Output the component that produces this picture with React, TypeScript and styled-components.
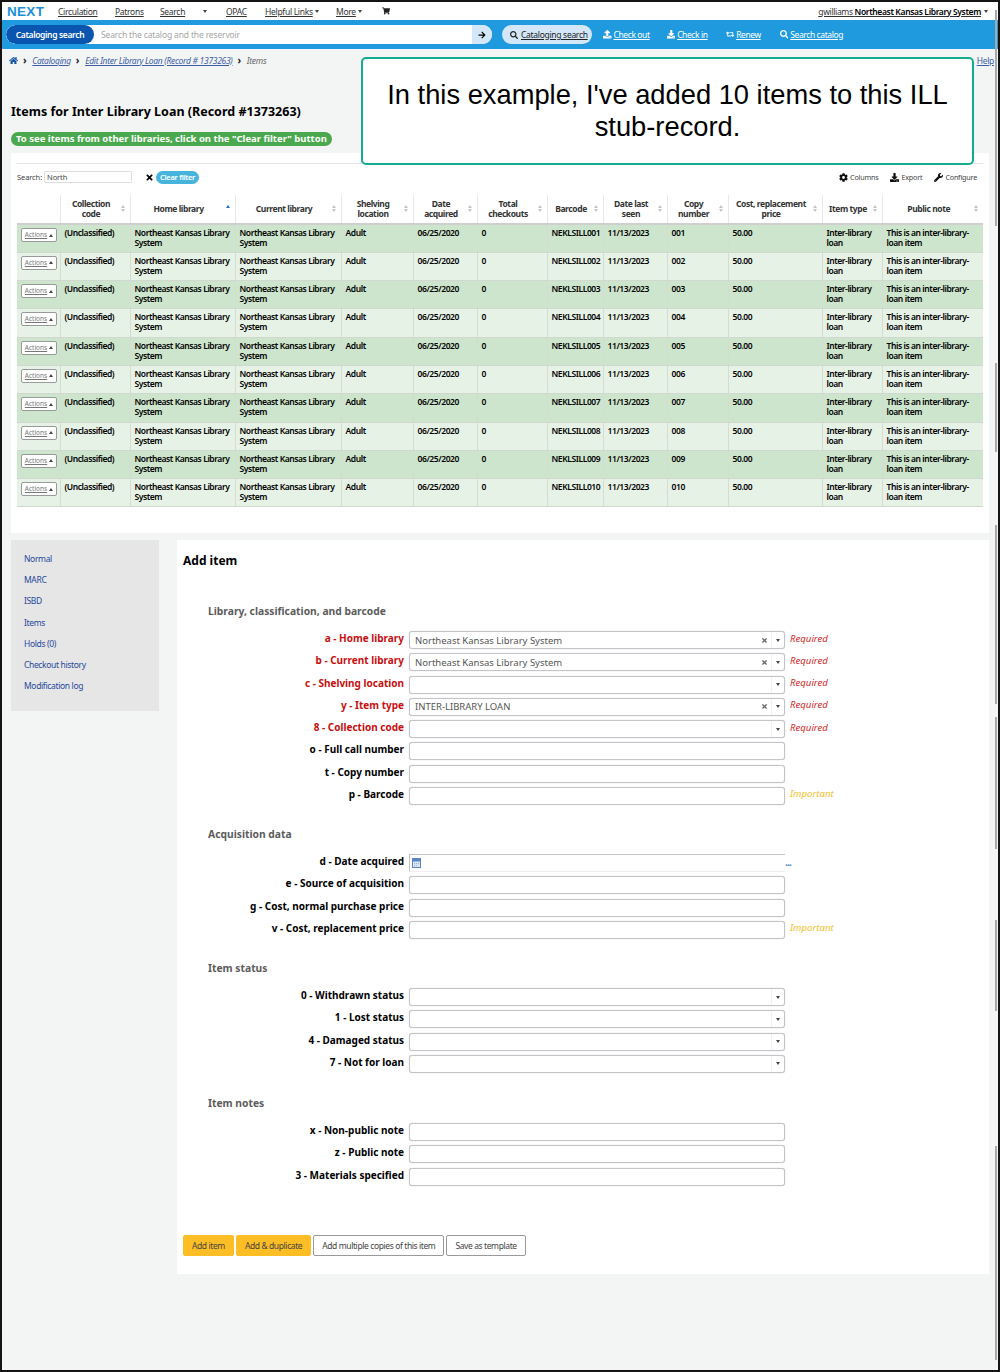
import React from "react";
import styled, { createGlobalStyle } from "styled-components";
import {
  FaHome,
  FaShoppingCart,
  FaSearch,
  FaArrowRight,
  FaUpload,
  FaDownload,
  FaRetweet,
  FaCog,
  FaWrench,
  FaTimes,
} from "react-icons/fa";

const GlobalStyle = createGlobalStyle`
  html, body {
    margin: 0;
    padding: 0;
    background: #f3f5f4;
    overflow: hidden;
  }
  * { box-sizing: border-box; }
`;

const Frame = styled.div`
  position: relative;
  width: 1000px;
  height: 1372px;
  overflow: hidden;
  border: 2px solid #141414;
  background: #f3f5f4;
  font-family: "Noto Sans", sans-serif;
  color: #000;
`;

const TopNav = styled.div`
  display: flex;
  align-items: center;
  height: 18px;
  padding-left: 5px;
  background: #fff;
  font-size: 8.5px;
  letter-spacing: -0.3px;
`;

const Logo = styled.span`
  font-family: "Liberation Sans", sans-serif;
  font-weight: 700;
  font-size: 13.5px;
  letter-spacing: 0.3px;
  color: #1b8fdb;
  width: 51px;
`;

const NavLink = styled.a<{ $w: number }>`
  width: ${({ $w }) => $w}px;
  color: #333;
  text-decoration: underline;
  white-space: nowrap;
  display: flex;
  align-items: center;
  gap: 2px;
`;

const Caret = styled.i<{ $up?: boolean }>`
  display: inline-block;
  width: 0;
  height: 0;
  border-left: 2.5px solid transparent;
  border-right: 2.5px solid transparent;
  ${({ $up }) => ($up ? "border-bottom: 3px solid #444;" : "border-top: 3px solid #444;")}
`;

const UserBox = styled.div`
  margin-left: auto;
  margin-right: 10px;
  display: flex;
  align-items: center;
  gap: 3px;
  letter-spacing: -0.35px;
  text-decoration: underline;
  color: #333;
  b { color: #000; font-weight: 600; }
`;

const SearchBar = styled.div`
  display: flex;
  align-items: center;
  height: 29px;
  padding-left: 4px;
  background: #1f9ade;
  font-size: 8.5px;
  letter-spacing: -0.3px;
`;

const SearchPill = styled.div`
  display: flex;
  align-items: center;
  width: 486px;
  height: 19px;
  background: #fff;
  border-radius: 10px;
  overflow: hidden;
`;

const SearchLabel = styled.span`
  display: flex;
  align-items: center;
  justify-content: center;
  width: 88px;
  height: 19px;
  background: #0a55b0;
  color: #fff;
  font-weight: 600;
  letter-spacing: -0.35px;
  border-radius: 10px;
`;

const SearchHint = styled.span`
  flex: 1;
  padding-left: 7px;
  color: #a5a5a5;
  letter-spacing: -0.15px;
`;

const SearchGo = styled.span`
  display: flex;
  align-items: center;
  justify-content: center;
  width: 20px;
  height: 19px;
  background: #d4e7f8;
  font-size: 8px;
`;

const TabActive = styled.a`
  display: flex;
  align-items: center;
  gap: 3px;
  height: 19px;
  width: 90px;
  margin-left: 10px;
  padding-left: 8px;
  border-radius: 10px;
  background: #d4e7f8;
  color: #222;
  text-decoration: underline;
  white-space: nowrap;
`;

const Tab = styled.a<{ $ml: number }>`
  display: flex;
  align-items: center;
  gap: 2px;
  margin-left: ${({ $ml }) => $ml}px;
  color: #fff;
  letter-spacing: -0.4px;
  text-decoration: underline;
  svg { font-size: 8.5px; }
`;

const Crumbs = styled.div`
  display: flex;
  align-items: center;
  height: 22px;
  padding-left: 7px;
  font-size: 8.5px;
  font-style: italic;
  letter-spacing: -0.3px;
  color: #666;
  a { color: #3c5ea8; text-decoration: underline; }
`;

const CrumbSep = styled.span`
  font-style: normal;
  font-weight: 700;
  color: #222;
  margin: 0 6px 0 5px;
  font-size: 10px;
  line-height: 8px;
`;

const HelpLink = styled.a`
  margin-left: auto;
  margin-right: 4px;
  font-style: normal;
`;

const Title = styled.h1`
  margin: 30px 0 0 9px;
  height: 22px;
  line-height: 22px;
  font-size: 12.5px;
  font-weight: 700;
`;

const FilterNote = styled.div`
  display: block;
  width: fit-content;
  margin: 9px 0 0 9px;
  height: 14px;
  line-height: 14px;
  padding: 0 5px;
  border-radius: 7px;
  background: #4aa84e;
  color: #fff;
  font-size: 9.5px;
  font-weight: 700;
  white-space: nowrap;
`;

const ItemsPanel = styled.section`
  margin: 7px 9px 0 9px;
  height: 380px;
  padding: 10px 6px 0 6px;
  background: #fff;
`;

const PanelRule = styled.div`
  height: 1px;
  background: #e4e4e4;
`;

const TableTools = styled.div`
  display: flex;
  align-items: center;
  height: 31px;
  padding: 0 6px 5px 0;
  font-size: 7.5px;
  letter-spacing: -0.1px;
  color: #444;
`;

const FilterInput = styled.div`
  width: 88px;
  height: 12px;
  margin-left: 2px;
  padding-left: 2px;
  line-height: 10px;
  border: 1px solid #ddd;
  border-radius: 1px;
`;

const ClearX = styled.span`
  display: flex;
  margin-left: 13px;
  font-size: 9px;
  color: #000;
`;

const ClearBtn = styled.span`
  height: 13px;
  line-height: 13px;
  margin-left: 2px;
  padding: 0 4px;
  border-radius: 7px;
  background: #46b4dd;
  color: #fff;
  font-weight: 600;
  letter-spacing: -0.3px;
`;

const ToolLink = styled.a<{ $ml?: string }>`
  display: flex;
  align-items: center;
  gap: 2px;
  margin-left: ${({ $ml }) => $ml || "12px"};
  font-size: 7.2px;
  letter-spacing: -0.2px;
  color: #444;
  svg { color: #111; font-size: 9px; }
`;

const ItemsTable = styled.table`
  width: 966px;
  table-layout: fixed;
  border-collapse: collapse;
  font-size: 8.5px;
  letter-spacing: -0.42px;
  line-height: 10px;
  font-weight: 600;
`;

const Col = styled.col<{ $w: number }>`
  width: ${({ $w }) => $w}px;
`;

const Th = styled.th`
  position: relative;
  height: 29px;
  padding: 0 12px 0 4px;
  font-weight: 700;
  color: #333;
  text-align: center;
  border-left: 1px solid #e8e8e8;
  border-bottom: 2px solid #cfcfcf;
  &:first-child { border-left: 0; }
`;

const SortMark = styled.span<{ $active?: boolean }>`
  position: absolute;
  right: 5px;
  top: 10px;
  display: flex;
  flex-direction: column;
  gap: 1px;
  i {
    width: 0;
    height: 0;
    border-left: 2.5px solid transparent;
    border-right: 2.5px solid transparent;
  }
  i:first-child { border-bottom: 3px solid ${({ $active }) => ($active ? "#1f6fc4" : "#c4c4c4")}; }
  i:last-child { border-top: 3px solid ${({ $active }) => ($active ? "transparent" : "#c4c4c4")}; }
`;

const Tr = styled.tr<{ $odd: boolean }>`
  background: ${({ $odd }) => ($odd ? "#cde5cc" : "#e7f2e6")};
`;

const Td = styled.td`
  height: 28.3px;
  padding: 3px 4px 0 4px;
  vertical-align: top;
  border-left: 1px solid #d5dcd4;
  border-bottom: 1px solid #d0d8cf;
  &:first-child { border-left: 0; }
`;

const ActionsBtn = styled.span`
  display: flex;
  align-items: center;
  justify-content: center;
  gap: 2px;
  width: 36px;
  height: 14px;
  background: #fff;
  border: 1px solid #999;
  border-radius: 2px;
  font-size: 6.5px;
  letter-spacing: 0;
  font-weight: 400;
  color: #777;
  text-decoration: underline;
`;

const Lower = styled.div`
  display: flex;
  align-items: flex-start;
  gap: 18px;
  margin: 7px 9px 0 9px;
`;

const SideMenu = styled.nav`
  width: 148px;
  height: 171px;
  padding: 8px 13px;
  background: #e6e6e6;
  flex-shrink: 0;
  a {
    display: block;
    height: 21.2px;
    line-height: 21.2px;
    font-size: 8.5px;
    letter-spacing: -0.35px;
    color: #27489c;
  }
`;

const MainPanel = styled.main`
  flex: 1;
  height: 734px;
  padding: 0 6px;
  background: #fff;
`;

const AddTitle = styled.h2`
  margin: 0;
  padding-top: 12px;
  height: 64px;
  line-height: 18px;
  font-size: 12px;
  font-weight: 700;
`;

const FieldSet = styled.div<{ $mt: number }>`
  margin: ${({ $mt }) => $mt}px 0 0 25px;
`;

const Legend = styled.h3`
  margin: 0 0 11px 0;
  height: 14px;
  line-height: 14px;
  font-size: 10.3px;
  font-weight: 700;
  color: #5c5c5c;
`;

const Row = styled.div`
  display: flex;
  align-items: center;
  height: 22.25px;
`;

const Label = styled.label<{ $req?: boolean }>`
  width: 196px;
  margin-right: 5px;
  margin-top: -4px;
  text-align: right;
  font-size: 10px;
  font-weight: 700;
  white-space: nowrap;
  color: ${({ $req }) => ($req ? "#c80f0f" : "#000")};
`;

const Control = styled.div`
  display: flex;
  align-items: center;
  width: 376px;
  height: 18px;
  padding-left: 5px;
  background: #fff;
  border: 1px solid #c4c4c8;
  border-radius: 3px;
  box-shadow: 0 0 1px #bbb;
  font-size: 9.5px;
  color: #555;
`;

const SelectValue = styled.span`
  flex: 1;
`;

const ClearMark = styled.span`
  display: flex;
  margin-right: 3px;
  color: #666;
  font-size: 7px;
`;

const Arrow = styled.span`
  display: flex;
  align-items: center;
  justify-content: center;
  width: 13px;
  height: 16px;
  border-left: 1px solid #f0f0f0;
`;

const Hint = styled.span<{ $tone: "req" | "imp" }>`
  margin-left: 5px;
  margin-top: -4px;
  font-size: 9.6px;
  font-style: italic;
  color: ${({ $tone }) => ($tone === "req" ? "#cf2a2a" : "#efbf1f")};
`;

const DateControl = styled(Control)`
  border-right: 0;
  border-bottom-color: #eee;
  border-radius: 0;
  box-shadow: none;
  padding-left: 2px;
`;

const DateDots = styled.span`
  margin-top: -2px;
  font-size: 10px;
  font-weight: 700;
  line-height: 8px;
  letter-spacing: -0.8px;
  color: #5a86c4;
`;

const ButtonRow = styled.div`
  display: flex;
  gap: 2px;
  margin-top: 47px;
`;

const Btn = styled.span<{ $primary?: boolean }>`
  display: flex;
  align-items: center;
  height: 21px;
  padding: 0 8px;
  font-size: 8.5px;
  letter-spacing: -0.4px;
  border-radius: 2px;
  color: #444;
  background: ${({ $primary }) => ($primary ? "#fdbd24" : "#fff")};
  border: 1px solid ${({ $primary }) => ($primary ? "#fdbd24" : "#999")};
`;

const Callout = styled.div`
  position: absolute;
  left: 359px;
  top: 55px;
  width: 613px;
  height: 108px;
  padding: 20px 10px 0;
  background: #fff;
  border: 2px solid #12ad8f;
  border-radius: 5px;
  font-family: "Liberation Sans", sans-serif;
  font-size: 27.3px;
  line-height: 32px;
  text-align: center;
  color: #000;
`;

const ScrollThumb = styled.div<{ $top: number; $h: number }>`
  position: absolute;
  right: 1px;
  top: ${({ $top }) => $top}px;
  width: 2px;
  height: ${({ $h }) => $h}px;
  background: #a9a9a9;
`;

const columns = [
  { w: 43, label: "" },
  { w: 70, label: "Collection code" },
  { w: 105, label: "Home library", active: true },
  { w: 106, label: "Current library" },
  { w: 72, label: "Shelving location" },
  { w: 64, label: "Date acquired" },
  { w: 70, label: "Total checkouts" },
  { w: 56, label: "Barcode" },
  { w: 64, label: "Date last seen" },
  { w: 61, label: "Copy number" },
  { w: 94, label: "Cost, replacement price" },
  { w: 60, label: "Item type" },
  { w: 101, label: "Public note" },
];

const rows = ["001", "002", "003", "004", "005", "006", "007", "008", "009", "010"];

const menu = ["Normal", "MARC", "ISBD", "Items", "Holds (0)", "Checkout history", "Modification log"];

const scrollSegments = [
  { top: 8, h: 216 },
  { top: 361, h: 89 },
  { top: 523, h: 179 },
  { top: 715, h: 132 },
  { top: 918, h: 91 },
  { top: 1144, h: 214 },
];

type Field = {
  label: string;
  req?: boolean;
  kind?: "select" | "date";
  value?: string;
  hint?: "Required" | "Important";
};

const sections: { title: string; mt: number; fields: Field[] }[] = [
  {
    title: "Library, classification, and barcode",
    mt: 0,
    fields: [
      { label: "a - Home library", req: true, kind: "select", value: "Northeast Kansas Library System", hint: "Required" },
      { label: "b - Current library", req: true, kind: "select", value: "Northeast Kansas Library System", hint: "Required" },
      { label: "c - Shelving location", req: true, kind: "select", hint: "Required" },
      { label: "y - Item type", req: true, kind: "select", value: "INTER-LIBRARY LOAN", hint: "Required" },
      { label: "8 - Collection code", req: true, kind: "select", hint: "Required" },
      { label: "o - Full call number" },
      { label: "t - Copy number" },
      { label: "p - Barcode", hint: "Important" },
    ],
  },
  {
    title: "Acquisition data",
    mt: 20,
    fields: [
      { label: "d - Date acquired", kind: "date" },
      { label: "e - Source of acquisition" },
      { label: "g - Cost, normal purchase price" },
      { label: "v - Cost, replacement price", hint: "Important" },
    ],
  },
  {
    title: "Item status",
    mt: 20,
    fields: [
      { label: "0 - Withdrawn status", kind: "select" },
      { label: "1 - Lost status", kind: "select" },
      { label: "4 - Damaged status", kind: "select" },
      { label: "7 - Not for loan", kind: "select" },
    ],
  },
  {
    title: "Item notes",
    mt: 21,
    fields: [
      { label: "x - Non-public note" },
      { label: "z - Public note" },
      { label: "3 - Materials specified" },
    ],
  },
];

const CalendarIcon = () => (
  <svg width="9" height="10" viewBox="0 0 9 10">
    <rect x="0.5" y="0.5" width="8" height="9" fill="#dbe6f3" stroke="#5a86c4" />
    <rect x="0.5" y="0.5" width="8" height="3" fill="#5a86c4" />
    <path d="M2 5.5h1M4 5.5h1M6 5.5h1M2 7.5h1M4 7.5h1" stroke="#9db7da" />
  </svg>
);

const FieldControl = ({ field }: { field: Field }) => {
  if (field.kind === "date") {
    return (
      <>
        <DateControl>
          <CalendarIcon />
        </DateControl>
        <DateDots>...</DateDots>
      </>
    );
  }
  if (field.kind === "select") {
    return (
      <Control>
        <SelectValue>{field.value}</SelectValue>
        {field.value && (
          <ClearMark>
            <FaTimes />
          </ClearMark>
        )}
        <Arrow>
          <Caret />
        </Arrow>
      </Control>
    );
  }
  return <Control />;
};

export default function App() {
  return (
    <Frame>
      <GlobalStyle />
      <TopNav>
        <Logo>NEXT</Logo>
        <NavLink $w={57}>Circulation</NavLink>
        <NavLink $w={45}>Patrons</NavLink>
        <NavLink $w={43}>Search</NavLink>
        <NavLink $w={23}>
          <Caret />
        </NavLink>
        <NavLink $w={39}>OPAC</NavLink>
        <NavLink $w={71}>
          Helpful Links <Caret />
        </NavLink>
        <NavLink $w={46}>
          More <Caret />
        </NavLink>
        <FaShoppingCart size={8} color="#222" />
        <UserBox>
          <span>
            gwilliams <b>Northeast Kansas Library System</b>
          </span>
          <Caret />
        </UserBox>
      </TopNav>
      <SearchBar>
        <SearchPill>
          <SearchLabel>Cataloging search</SearchLabel>
          <SearchHint>Search the catalog and the reservoir</SearchHint>
          <SearchGo>
            <FaArrowRight />
          </SearchGo>
        </SearchPill>
        <TabActive>
          <FaSearch size={8} /> Cataloging search
        </TabActive>
        <Tab $ml={11}>
          <FaUpload /> Check out
        </Tab>
        <Tab $ml={17}>
          <FaDownload /> Check in
        </Tab>
        <Tab $ml={18}>
          <FaRetweet /> Renew
        </Tab>
        <Tab $ml={19}>
          <FaSearch /> Search catalog
        </Tab>
      </SearchBar>
      <Crumbs>
        <FaHome size={9} color="#1a56a8" />
        <CrumbSep>›</CrumbSep>
        <a>Cataloging</a>
        <CrumbSep>›</CrumbSep>
        <a>Edit Inter Library Loan (Record # 1373263)</a>
        <CrumbSep>›</CrumbSep>
        Items
        <HelpLink>Help</HelpLink>
      </Crumbs>
      <Title>Items for Inter Library Loan (Record #1373263)</Title>
      <FilterNote>To see items from other libraries, click on the "Clear filter" button</FilterNote>
      <ItemsPanel>
        <PanelRule />
        <TableTools>
          Search:
          <FilterInput>North</FilterInput>
          <ClearX>
            <FaTimes />
          </ClearX>
          <ClearBtn>Clear filter</ClearBtn>
          <ToolLink $ml="auto">
            <FaCog /> Columns
          </ToolLink>
          <ToolLink>
            <FaDownload /> Export
          </ToolLink>
          <ToolLink>
            <FaWrench /> Configure
          </ToolLink>
        </TableTools>
        <ItemsTable>
          <colgroup>
            {columns.map((col) => (
              <Col key={col.label} $w={col.w} />
            ))}
          </colgroup>
          <thead>
            <tr>
              {columns.map((col) => (
                <Th key={col.label}>
                  {col.label}
                  {col.label && (
                    <SortMark $active={col.active}>
                      <i />
                      <i />
                    </SortMark>
                  )}
                </Th>
              ))}
            </tr>
          </thead>
          <tbody>
            {rows.map((num, i) => (
              <Tr key={num} $odd={i % 2 === 0}>
                <Td>
                  <ActionsBtn>
                    Actions <Caret $up />
                  </ActionsBtn>
                </Td>
                <Td>(Unclassified)</Td>
                <Td>Northeast Kansas Library System</Td>
                <Td>Northeast Kansas Library System</Td>
                <Td>Adult</Td>
                <Td>06/25/2020</Td>
                <Td>0</Td>
                <Td>NEKLSILL{num}</Td>
                <Td>11/13/2023</Td>
                <Td>{num}</Td>
                <Td>50.00</Td>
                <Td>Inter-library loan</Td>
                <Td>This is an inter-library-loan item</Td>
              </Tr>
            ))}
          </tbody>
        </ItemsTable>
      </ItemsPanel>
      <Lower>
        <SideMenu>
          {menu.map((m) => (
            <a key={m}>{m}</a>
          ))}
        </SideMenu>
        <MainPanel>
          <AddTitle>Add item</AddTitle>
          {sections.map((s) => (
            <FieldSet key={s.title} $mt={s.mt}>
              <Legend>{s.title}</Legend>
              {s.fields.map((f) => (
                <Row key={f.label}>
                  <Label $req={f.req}>{f.label}</Label>
                  <FieldControl field={f} />
                  {f.hint && <Hint $tone={f.hint === "Required" ? "req" : "imp"}>{f.hint}</Hint>}
                </Row>
              ))}
            </FieldSet>
          ))}
          <ButtonRow>
            <Btn $primary>Add item</Btn>
            <Btn $primary>Add &amp; duplicate</Btn>
            <Btn>Add multiple copies of this item</Btn>
            <Btn>Save as template</Btn>
          </ButtonRow>
        </MainPanel>
      </Lower>
      <Callout>
        In this example, I've added 10 items to this ILL
        <br />
        stub-record.
      </Callout>
      {scrollSegments.map((seg) => (
        <ScrollThumb key={seg.top} $top={seg.top} $h={seg.h} />
      ))}
    </Frame>
  );
}
